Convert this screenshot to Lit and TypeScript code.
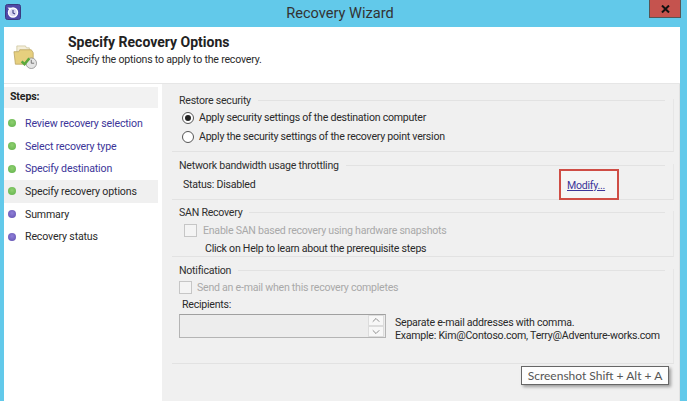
import { LitElement, css, html, svg } from "lit";
import { customElement } from "lit/decorators.js";

const steps = [
  { label: "Review recovery selection", done: true, link: true },
  { label: "Select recovery type", done: true, link: true },
  { label: "Specify destination", done: true, link: true },
  { label: "Specify recovery options", done: true, active: true },
  { label: "Summary" },
  { label: "Recovery status" },
];

@customElement("app-root")
export class AppRoot extends LitElement {
  static styles = css`
    :host {
      display: block;
      width: 687px;
      height: 401px;
      overflow: hidden;
      position: relative;
      background: #62c9ea;
      font-family: Roboto, "Noto Sans", sans-serif;
      font-size: 10.6px;
      letter-spacing: -0.25px;
      color: #2a2a2a;
    }
    .titlebar {
      height: 27px;
      display: flex;
      align-items: flex-start;
      position: relative;
      letter-spacing: 0;
    }
    .app-icon {
      margin: 4px 0 0 5px;
      width: 16px;
      height: 16px;
      flex: none;
    }
    .title {
      flex: 1;
      text-align: center;
      font-size: 14.6px;
      line-height: 27px;
      color: #333;
      padding-left: 10px;
    }
    .close {
      width: 32px;
      height: 18px;
      margin-right: 6px;
      background: #c5534e;
      border: 1px solid #555;
      border-top: 0;
      box-sizing: border-box;
      display: flex;
      align-items: center;
      justify-content: center;
      flex: none;
    }
    .window {
      margin: 0 7px 0 4px;
      height: 374px;
      background: #f0f0f0;
      display: flex;
      flex-direction: column;
    }
    .header {
      height: 57px;
      flex: none;
      background: #fff;
      border-bottom: 1px solid #e6e6e6;
      box-sizing: border-box;
      display: flex;
    }
    .header-icon {
      width: 25px;
      height: 25px;
      margin: 17px 0 0 9px;
      flex: none;
    }
    .header-text {
      margin-left: 30px;
    }
    .header-title {
      font-weight: 700;
      font-size: 14px;
      letter-spacing: 0;
      line-height: 17px;
      margin-top: 7px;
      color: #222;
    }
    .header-sub {
      line-height: 16px;
      letter-spacing: -0.2px;
      margin-top: 1px;
      margin-left: -2px;
    }
    .body {
      flex: 1;
      display: flex;
      min-height: 0;
    }
    .sidebar {
      width: 158px;
      flex: none;
      background: #fff;
      letter-spacing: -0.15px;
    }
    .steps-head {
      height: 21px;
      line-height: 20px;
      background: #f2f2f2;
      font-weight: 700;
      padding-left: 6px;
      margin-right: 4px;
      margin-top: 3px;
      color: #222;
    }
    .step {
      height: 22.7px;
      display: flex;
      align-items: center;
      margin-right: 4px;
      padding-left: 4px;
      white-space: nowrap;
    }
    .step-list {
      margin-top: 4px;
    }
    .step.active {
      background: #f0f0f0;
    }
    .step.link {
      color: #3c3599;
    }
    .dot {
      width: 8px;
      height: 8px;
      border-radius: 50%;
      margin-right: 9px;
      flex: none;
      background: radial-gradient(circle at 50% 40%, #8f7fd8, #5f4fae);
    }
    .dot.done {
      background: radial-gradient(circle at 50% 40%, #8fd070, #5fb04a);
    }
    .panel {
      flex: 1;
      min-width: 0;
      padding: 15px 5px 0 10px;
      display: flex;
      flex-direction: column;
      border-right: 1px solid #e2e2e2;
    }
    .group {
      border-bottom: 1px solid #e2e2e2;
      border-right: 1px solid #e6e6e6;
      box-sizing: border-box;
      flex: none;
    }
    .g1 { height: 53px; }
    .g2 { height: 36px; margin-top: 12px; }
    .g3 { height: 46px; margin-top: 11px; }
    .g4 { height: 95px; margin-top: 12px; }
    .legend {
      display: flex;
      align-items: center;
      height: 1px;
      padding-left: 7px;
      padding-top: 1px;
      color: #2f2f2f;
    }
    .legend span {
      padding-right: 7px;
      white-space: nowrap;
    }
    .legend i {
      flex: 1;
      height: 1px;
      background: #e2e2e2;
      margin-right: 8px;
    }
    .row {
      display: flex;
      align-items: center;
      white-space: nowrap;
    }
    .radio {
      width: 10px;
      height: 10px;
      border: 1px solid #555;
      border-radius: 50%;
      background: #fff;
      margin: 0 5px 0 10px;
      flex: none;
      display: flex;
      align-items: center;
      justify-content: center;
    }
    .radio b {
      width: 6px;
      height: 6px;
      background: #222;
      border-radius: 50%;
    }
    .g1 .row { height: 19px; }
    .g1 .row.first { margin-top: 7px; }
    .status {
      display: flex;
      justify-content: space-between;
      padding-left: 11px;
      height: 34px;
      align-items: center;
    }
    .status-text { margin-top: 3px; }
    .modify {
      box-sizing: border-box;
      width: 60px;
      height: 31px;
      margin: 2px 54px 0 0;
      border: 2.5px solid #cf4d45;
      color: #3c3599;
      text-decoration: underline;
      display: flex;
      align-items: center;
      padding: 3px 0 0 6px;
      background: #f5f5f5;
    }
    .check {
      width: 11px;
      height: 11px;
      border: 1px solid #c6c6c6;
      background: #f4f4f4;
      flex: none;
    }
    .disabled { color: #a9a9a9; }
    .san-check {
      margin-top: 9px;
      height: 17px;
      padding-left: 12px;
    }
    .san-check .check { margin-right: 6px; }
    .san-help {
      padding-left: 33px;
      height: 18px;
      line-height: 20px;
    }
    .mail-check {
      margin-top: 7px;
      height: 18px;
      padding-left: 7px;
    }
    .mail-check .check { margin-right: 5px; }
    .recipients-label {
      padding-left: 10px;
      height: 16px;
      line-height: 18px;
    }
    .recipients {
      display: flex;
      padding-left: 7px;
      margin-top: 2px;
    }
    .field {
      width: 207px;
      height: 24px;
      box-sizing: border-box;
      border: 1px solid #b4b4b4;
      border-top-color: #a0a0a0;
      background: #ededed;
      flex: none;
      display: flex;
      justify-content: flex-end;
      align-items: center;
      padding-right: 1px;
    }
    .spin {
      width: 16px;
      display: flex;
      flex-direction: column;
    }
    .spin svg {
      display: block;
      width: 16px;
      height: 11px;
      background: #f7f7f7;
      border: 1px solid #dcdcdc;
      box-sizing: border-box;
    }
    .hint {
      margin: 3px 0 0 9px;
      line-height: 12.500px;
      white-space: nowrap;
    }
    .tooltip {
      position: absolute;
      left: 521px;
      top: 366px;
      width: 148px;
      height: 19px;
      box-sizing: border-box;
      border: 1px solid #666;
      background: #fdfdfd;
      box-shadow: 2px 2px 3px rgba(0, 0, 0, 0.35);
      color: #555;
      font-family: Lato, sans-serif;
      font-size: 12px;
      letter-spacing: 0;
      line-height: 17px;
      text-align: center;
      white-space: nowrap;
    }
  `;

  private appIcon() {
    return svg`<svg class="app-icon" viewBox="0 0 16 16">
      <rect x="0.5" y="0.5" width="15" height="15" rx="2" fill="#5048a8" stroke="#3a3a80"/>
      <circle cx="8" cy="8.5" r="4.5" fill="#d8d4f0" stroke="#fff" stroke-width="1.4"/>
      <path d="M8 6v3l2 1" fill="none" stroke="#3a3a80" stroke-width="1.1"/>
      <path d="M2.5 3.5l3.5 0.2-0.6 3z" fill="#fff"/>
    </svg>`;
  }

  private folderIcon() {
    return svg`<svg class="header-icon" viewBox="0 0 26 26">
      <path d="M4 2h9l1 2h3v6H4z" fill="#f4eeda" stroke="#c8bd90" stroke-width="0.7"/>
      <path d="M1 8h5l1-2h12l2 3v12H2.500z" fill="#e6cf7e" stroke="#b8a25e" stroke-width="0.8"/>
      <circle cx="19" cy="20" r="5.500" fill="#e4e4e4" stroke="#8a8a8a" stroke-width="0.8"/>
      <path d="M19 16.500V20h3" fill="none" stroke="#666" stroke-width="0.9"/>
      <path d="M9 18l3 3 5-6" fill="none" stroke="#5aa83c" stroke-width="2.600"/>
    </svg>`;
  }

  render() {
    return html`
      <div class="titlebar">
        ${this.appIcon()}
        <div class="title">Recovery Wizard</div>
        <div class="close">
          <svg width="9" height="8" viewBox="0 0 9 8">
            <path d="M1 0.500l7 7M8 0.500l-7 7" stroke="#111" stroke-width="2" />
          </svg>
        </div>
      </div>
      <div class="window">
        <div class="header">
          ${this.folderIcon()}
          <div class="header-text">
            <div class="header-title">Specify Recovery Options</div>
            <div class="header-sub">Specify the options to apply to the recovery.</div>
          </div>
        </div>
        <div class="body">
          <div class="sidebar">
            <div class="steps-head">Steps:</div>
            <div class="step-list">
              ${steps.map(
                (s) => html`<div class="step ${s.link ? "link" : ""} ${s.active ? "active" : ""}">
                  <span class="dot ${s.done ? "done" : ""}"></span>${s.label}
                </div>`
              )}
            </div>
          </div>
          <div class="panel">
            <div class="group g1">
              <div class="legend"><span>Restore security</span><i></i></div>
              <div class="row first">
                <span class="radio"><b></b></span>Apply security settings of the destination computer
              </div>
              <div class="row">
                <span class="radio"></span>Apply the security settings of the recovery point version
              </div>
            </div>
            <div class="group g2">
              <div class="legend"><span>Network bandwidth usage throttling</span><i></i></div>
              <div class="status">
                <span class="status-text">Status: Disabled</span>
                <span class="modify">Modify...</span>
              </div>
            </div>
            <div class="group g3">
              <div class="legend"><span>SAN Recovery</span><i></i></div>
              <div class="row san-check disabled">
                <span class="check"></span>Enable SAN based recovery using hardware snapshots
              </div>
              <div class="san-help">Click on Help to learn about the prerequisite steps</div>
            </div>
            <div class="group g4">
              <div class="legend"><span>Notification</span><i></i></div>
              <div class="row mail-check disabled">
                <span class="check"></span>Send an e-mail when this recovery completes
              </div>
              <div class="recipients-label">Recipients:</div>
              <div class="recipients">
                <div class="field">
                  <div class="spin">
                    <svg viewBox="0 0 16 11"><path d="M4 7l4-4 4 4" fill="none" stroke="#777" /></svg>
                    <svg viewBox="0 0 16 11"><path d="M4 4l4 4 4-4" fill="none" stroke="#777" /></svg>
                  </div>
                </div>
                <div class="hint">
                  Separate e-mail addresses with comma.<br />
                  Example: Kim@Contoso.com, Terry@Adventure-works.com
                </div>
              </div>
            </div>
          </div>
        </div>
      </div>
      <div class="tooltip">Screenshot Shift + Alt + A</div>
    `;
  }
}
